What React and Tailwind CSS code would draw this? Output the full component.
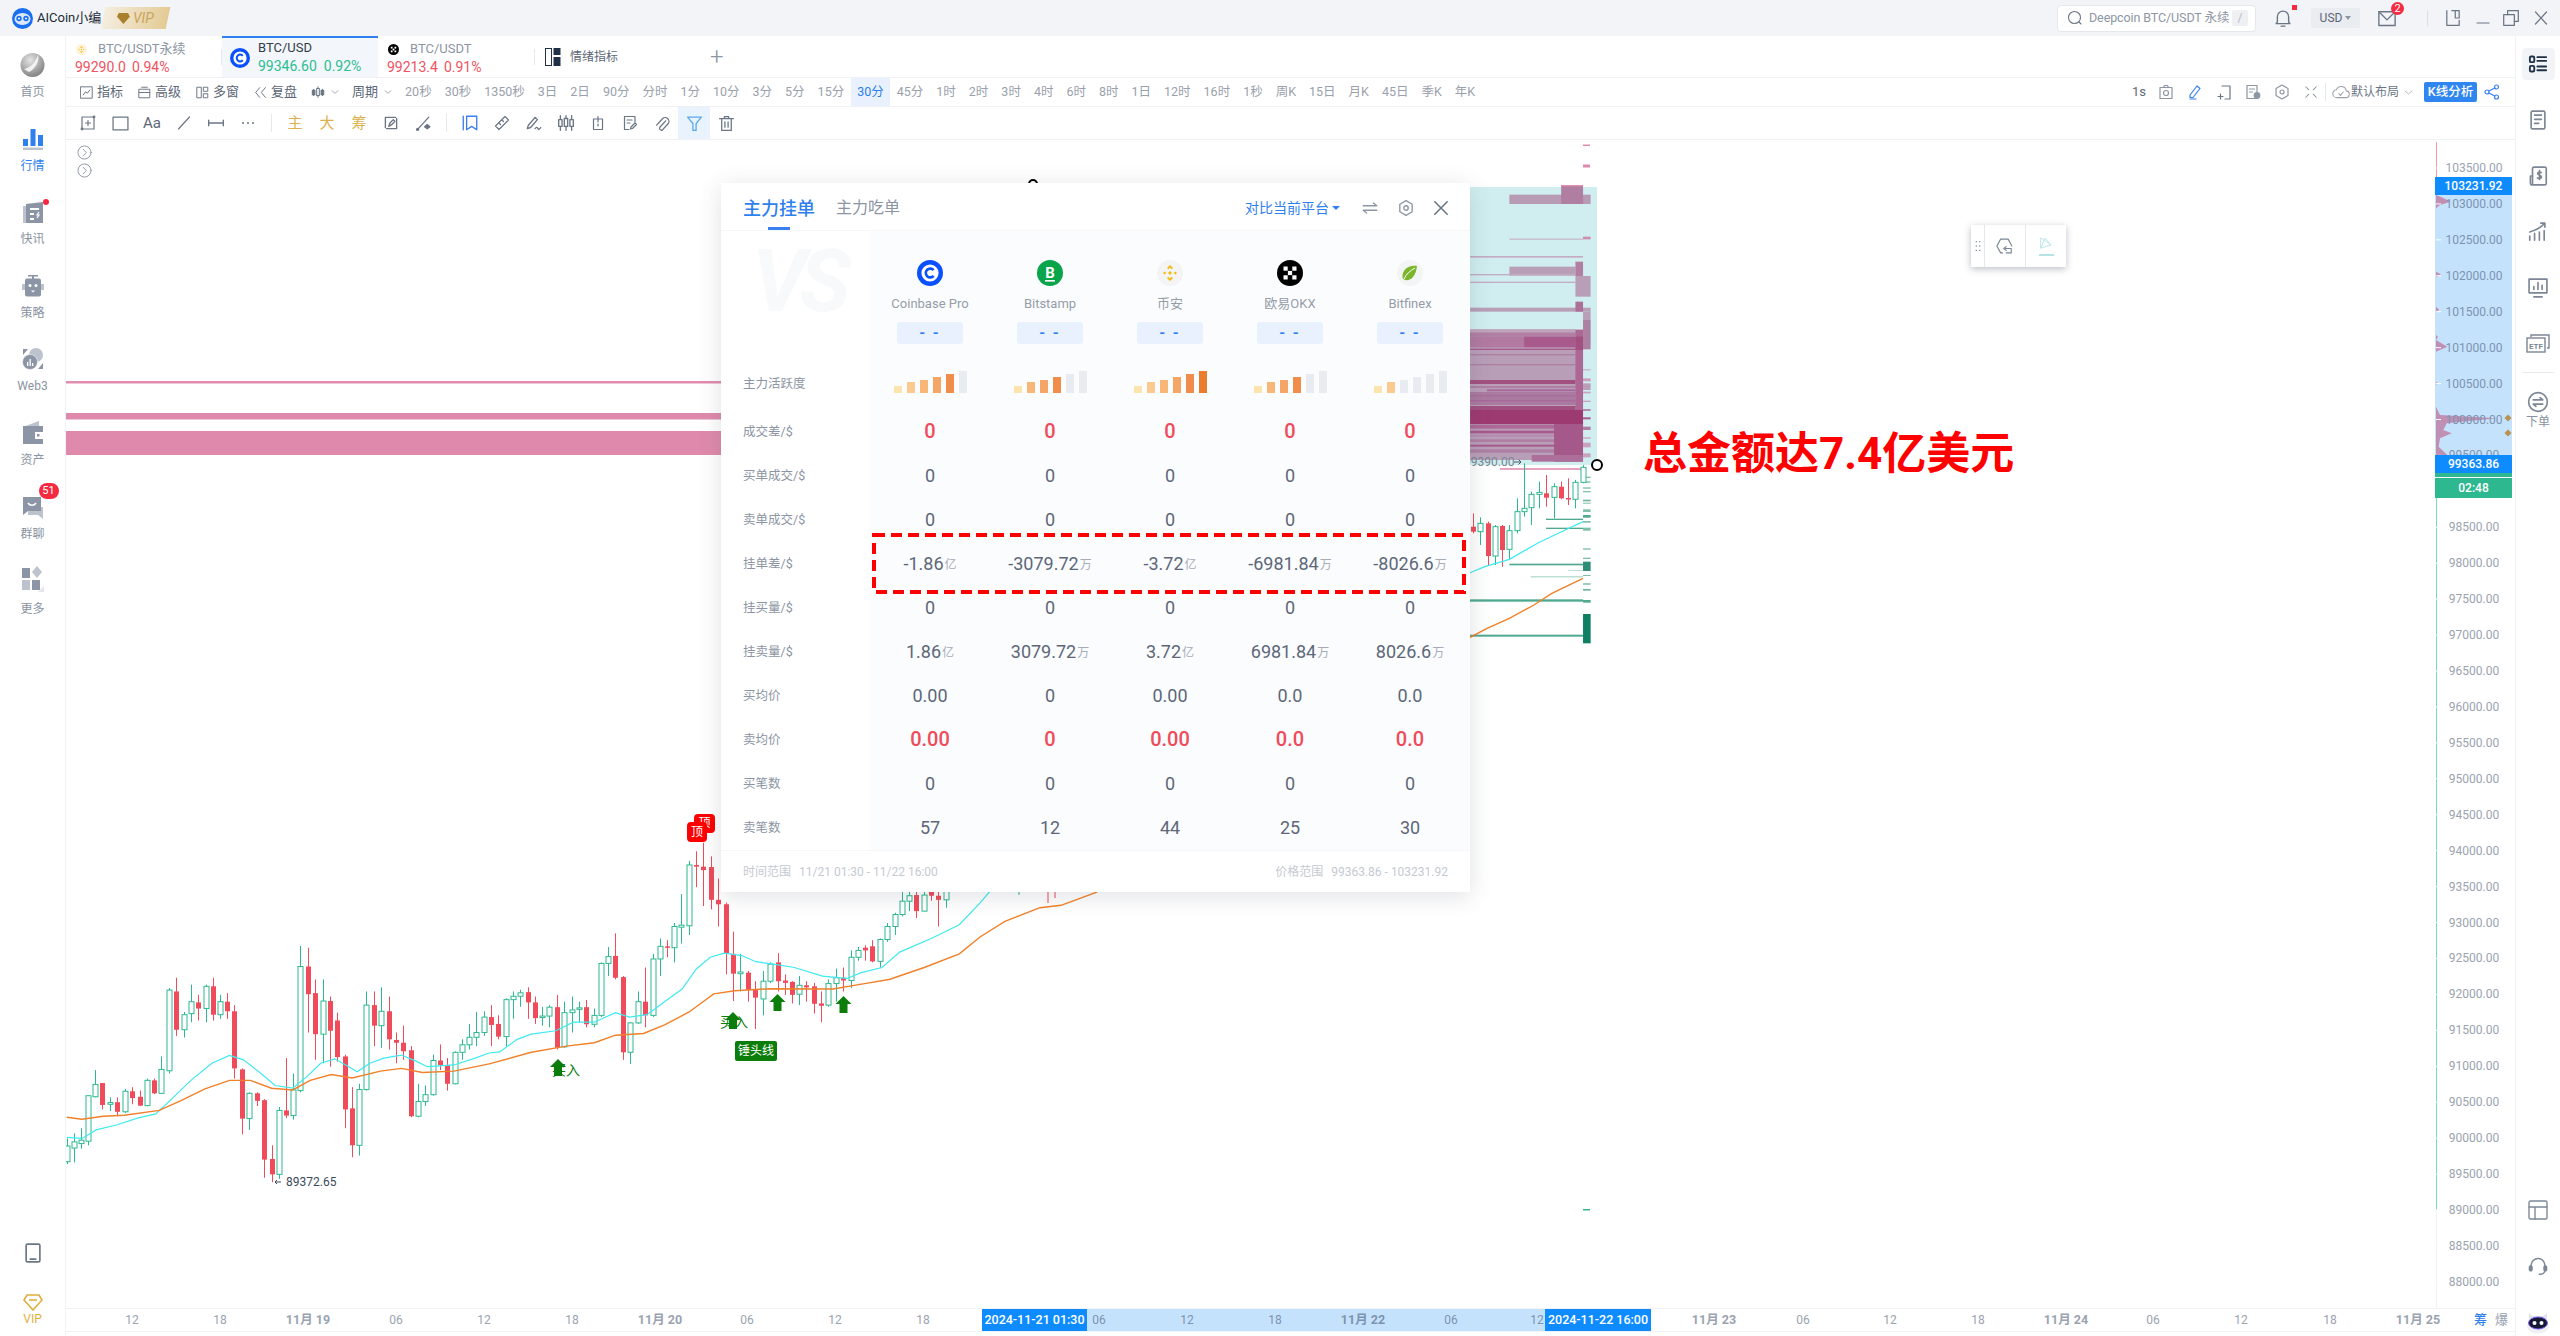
import React from "react";

const Ic = ({ s = 16, w, h, c = "#6b7685", sw = 1.2, children, className = "" }) => (
  <svg width={w || s} height={h || s} viewBox="0 0 16 16" fill="none" stroke={c} strokeWidth={sw} strokeLinecap="round" strokeLinejoin="round" className={`shrink-0 ${className}`}>
    {children}
  </svg>
);

// ---------- chart data, read off the reference ----------
const X7 = (x) => 40 + x / 1.425;
const Y7 = (y) => 800 + y / 2.925;
const X8 = (x) => 1400 + x / 2.24;
const Y8 = (y) => 160 + y / 3;

const Z7 = [
  [38,1012,1058,990,1065,0],[48,1000,1018,975,1060,0],[58,995,1005,960,1020,0],[69,865,998,865,1010,0],[79,832,868,790,870,0],[89,828,892,828,905,1],[100,885,890,870,910,0],[110,884,912,870,925,1],[121,852,912,845,915,0],[131,852,872,840,890,1],[142,868,894,850,895,1],[152,820,894,815,896,0],[163,820,858,815,860,1],[173,788,858,750,860,0],[184,556,792,550,800,0],[194,560,672,520,690,1],[205,628,672,620,695,0],[215,590,625,540,650,0],[225,592,610,570,645,1],[236,545,610,540,650,0],[246,545,628,520,645,1],[257,590,628,570,640,0],[267,590,618,565,640,1],[277,618,785,600,815,1],[288,788,932,785,978,1],[298,858,932,855,965,0],[309,858,880,855,895,1],[319,878,1052,875,1105,1],[330,1050,1095,1010,1118,1],[340,908,1095,898,1108,0],[351,908,923,755,930,1],[361,848,923,800,935,0],[371,487,850,427,855,0],[382,487,568,432,680,1],[392,565,685,525,760,1],[403,588,685,525,770,0],[413,588,675,575,780,1],[423,645,752,622,765,1],[434,750,905,745,960,1],[445,902,1010,840,1045,1],[455,847,1010,830,1040,0],[465,600,847,560,850,0],[476,600,660,560,720,1],[486,618,660,548,725,0],[497,618,700,575,730,1],[507,702,710,680,770,1],[517,710,735,660,760,1],[528,732,925,720,928,1],[539,882,925,830,928,0],[549,862,882,835,895,0],[560,762,862,745,865,0],[570,762,775,715,790,1],[580,775,830,755,850,1],[591,738,830,735,832,0],[601,716,738,700,760,0],[612,694,716,655,730,0],[622,680,694,620,720,0],[632,635,680,618,690,0],[643,635,658,600,720,1],[653,655,692,630,700,1],[664,584,692,580,720,0],[674,574,584,560,640,0],[684,564,574,555,605,0],[695,562,592,548,640,1],[705,592,638,575,655,1],[716,632,636,605,660,0],[726,606,632,600,665,0],[737,606,725,570,730,1],[747,622,722,590,725,0],[758,614,622,575,680,0],[768,608,612,590,650,0],[778,606,656,585,665,1],[789,630,656,610,665,0],[799,478,630,475,635,0],[810,458,478,430,515,0],[820,456,520,390,525,1],[831,518,738,515,760,1],[841,652,738,650,772,0],[852,590,652,560,655,0],[862,590,630,490,665,1],[873,465,630,450,635,0],[883,428,465,405,515,0],[893,428,432,410,460,1],[904,370,432,360,475,0],[914,366,372,275,420,0],[925,190,368,178,395,0],[935,190,195,150,255,1],[945,195,205,125,310,1],[956,196,292,165,320,1],[966,292,305,230,370,1],[977,305,448,300,510,1],[988,450,508,385,588,1],[998,503,508,450,560,0],[1009,505,555,500,590,1],[1019,555,578,530,670,1],[1030,530,582,500,630,0],[1040,480,530,475,535,0],[1051,475,530,448,560,1],[1061,528,535,510,570,1],[1071,532,570,530,595,1],[1082,542,568,515,600,0],[1092,542,548,530,590,1],[1103,545,596,535,625,1],[1113,595,602,560,650,1],[1123,537,600,525,605,0],[1134,520,537,493,590,0],[1144,520,528,490,560,1],[1155,460,528,440,550,0],[1165,440,460,430,470,0],[1176,432,440,425,470,1],[1186,428,472,410,475,1],[1197,408,472,405,490,0],[1207,370,408,360,415,0],[1218,335,370,330,395,0],[1228,296,335,268,340,0],[1239,280,296,265,325,0],[1249,278,325,265,345,1],[1259,278,325,260,325,0],[1270,268,280,250,295,1],[1280,280,292,265,370,1],[1291,262,292,250,315,0],
];
const Z8 = [
  [163,1100,1115,1060,1120,1],[180,1090,1115,1072,1155,0],[196,1090,1188,1085,1218,1],[213,1100,1188,1095,1215,0],[229,1098,1170,1095,1220,1],[245,1112,1168,1095,1200,0],[262,1055,1112,1015,1120,0],[278,1045,1055,910,1070,0],[294,1003,1043,995,1095,0],[311,997,1003,965,1045,0],[327,1000,1013,945,1040,1],[344,980,1012,970,1075,0],[360,980,1015,965,1018,1],[377,1014,1018,955,1035,1],[393,967,1018,960,1045,0],[410,922,967,915,970,0],
];
const candles = [
  ...Z7.map(([x, t, b, h, l, r]) => ({ x: X7(x), t: Y7(t), b: Y7(b), h: Y7(h), l: Y7(l), r })),
  ...Z8.map(([x, t, b, h, l, r]) => ({ x: X8(x), t: Y8(t), b: Y8(b), h: Y8(h), l: Y8(l), r })),
];

const cyan = [[38,987],[60,990],[80,965],[110,950],[140,930],[165,918],[190,870],[215,820],[245,770],[270,747],[290,760],[315,800],[335,835],[360,843],[380,810],[400,770],[420,757],[440,780],[452,795],[470,770],[490,755],[515,746],[535,763],[552,780],[590,775],[620,755],[640,740],[655,737],[680,700],[700,685],[735,675],[760,650],[790,650],[820,622],[840,635],[865,628],[890,590],[915,553],[935,495],[955,460],[975,448],[1000,455],[1020,473],[1045,480],[1075,490],[1115,515],[1150,522],[1170,505],[1200,490],[1225,445],[1270,405],[1310,365],[1340,300],[1365,240]].map(([x, y]) => `${X7(x)},${Y7(y)}`).concat([[157,1238],[190,1220],[245,1198],[310,1148],[370,1110],[410,1085]].map(([x, y]) => `${X8(x)},${Y8(y)}`)).join(" ");
const orange = [[38,928],[60,934],[90,925],[120,922],[170,908],[200,880],[235,845],[270,820],[300,820],[330,843],[360,848],[385,820],[415,803],[445,813],[485,793],[515,785],[545,797],[590,793],[640,772],[700,738],[750,720],[790,710],[820,688],[860,683],[890,658],[925,620],[960,567],[990,558],[1040,552],[1130,553],[1175,537],[1210,525],[1260,490],[1310,450],[1340,400],[1375,355],[1425,315],[1455,308],[1505,270]].map(([x, y]) => `${X7(x)},${Y7(y)}`).concat([[157,1432],[195,1405],[245,1375],[300,1335],[340,1300],[410,1255]].map(([x, y]) => `${X8(x)},${Y8(y)}`)).join(" ");

// x0, x1, y0, y1, colour : zoomed units of the heat map
const heat = [
  [157,410,508,900,"#b99eb8"],
  [245,427,104,132,"#b79ab4"],[361,410,75,132,"#b07ea0"],[361,410,75,79,"#e28caf"],
  [245,410,236,239,"#c3acc4"],[410,427,230,238,"#d08cb0"],[157,410,288,293,"#c3acc4"],
  [245,393,320,347,"#b99eb8"],[157,393,342,346,"#c3acc4"],[157,393,365,369,"#c3acc4"],
  [393,427,348,410,"#b99eb8"],[157,427,443,455,"#b99eb8"],[410,427,455,480,"#b99eb8"],
  [393,410,305,348,"#b27ea2"],[393,410,425,455,"#ac6f98"],[410,427,480,568,"#ad7fa3"],
  [157,393,508,516,"#c0a4bd"],[157,393,518,530,"#b07fa3"],[157,278,530,562,"#b27aa0"],[278,393,530,562,"#a85a8d"],
  [157,393,566,570,"#a85a8d"],[157,393,582,586,"#ad7fa3"],[157,393,612,616,"#ad7fa3"],
  [157,393,660,672,"#a2507f"],[157,393,678,684,"#b07fa3"],[195,393,688,694,"#a8689a"],[157,393,696,735,"#ab7aa0"],[157,393,706,709,"#a8689a"],[157,393,720,724,"#a8689a"],[157,393,738,750,"#a2507f"],
  [157,410,750,792,"#9e3a72"],[157,345,794,806,"#ad6a96"],[345,410,792,905,"#a5598a"],
  [157,345,812,820,"#a85a8d"],[157,345,824,830,"#b88ab0"],[157,345,838,846,"#b07fa3"],[157,345,854,860,"#a85a8d"],[157,345,868,878,"#ad7fa3"],[295,410,885,905,"#ab6f9a"],
  [393,410,510,750,"#ac6795"],[393,410,530,570,"#a2507f"],
  [410,427,628,631,"#c9a2bf"],[410,427,655,664,"#c9a2bf"],[410,427,670,690,"#b99eb8"],[410,427,695,700,"#c9a2bf"],[410,427,722,726,"#c9a2bf"],[410,427,748,752,"#a85a8d"],[410,427,772,778,"#a85a8d"],[410,427,800,810,"#ad7fa3"],[410,427,832,836,"#c9a2bf"],[410,427,848,862,"#c9a2bf"],[410,427,880,892,"#c9a2bf"],
];
const greens = [
  [327,410,1076,1080,"#4ea98f"],[327,410,1103,1107,"#4ea98f"],[245,410,1211,1216,"#4ea98f"],[293,410,1249,1252,"#9dcfbf"],[377,410,1230,1232,"#9dcfbf"],[100,410,1318,1325,"#4ea98f"],[100,410,1424,1430,"#4ea98f"],
  [410,427,950,954,"#7dbfa9"],[410,427,964,968,"#7dbfa9"],[410,427,982,986,"#7dbfa9"],[410,427,993,997,"#7dbfa9"],[410,427,1019,1024,"#6db5a0"],[410,427,1028,1031,"#7dbfa9"],[410,427,1048,1056,"#7dbfa9"],[410,427,1065,1073,"#4ea98f"],[410,427,1083,1088,"#7dbfa9"],[410,427,1103,1112,"#7dbfa9"],[410,427,1165,1169,"#7dbfa9"],[410,427,1193,1197,"#7dbfa9"],[410,427,1205,1233,"#2f8f76"],[410,427,1245,1248,"#7dbfa9"],[410,427,1270,1274,"#6db5a0"],[410,427,1287,1292,"#6db5a0"],[410,427,1320,1328,"#4ea98f"],[410,427,1362,1450,"#0f7f64"],
];
const profile = [[228,165],[245,172],[272,185],[240,195],[228,205],[228,395],[243,403],[228,412],[228,500],[238,510],[228,515],[228,585],[234,590],[228,600],[262,620],[228,635],[228,725],[234,730],[228,735],[228,800],[240,825],[410,835],[260,850],[250,870],[275,880],[240,895],[236,920],[262,945],[228,945]].map(([x, y]) => `${2360 + x / 3},${140 + y / 3}`).join(" ");

const prices = Array.from({ length: 32 }, (_, i) => ({ v: (103500 - i * 500).toFixed(2), y: 168 + i * 35.93 }));
const times = [[132,"12"],[220,"18"],[308,"11月 19",1],[396,"06"],[484,"12"],[572,"18"],[660,"11月 20",1],[747,"06"],[835,"12"],[923,"18"],[1099,"06",0,1],[1187,"12",0,1],[1275,"18",0,1],[1363,"11月 22",1,1],[1451,"06",0,1],[1537,"12",0,1],[1714,"11月 23",1],[1803,"06"],[1890,"12"],[1978,"18"],[2066,"11月 24",1],[2153,"06"],[2241,"12"],[2330,"18"],[2418,"11月 25",1]];

const periods = ["20秒","30秒","1350秒","3日","2日","90分","分时","1分","10分","3分","5分","15分","30分","45分","1时","2时","3时","4时","6时","8时","1日","12时","16时","1秒","周K","15日","月K","45日","季K","年K"];

// ---------- logos ----------
const Coinbase = ({ s = 26 }) => (
  <svg width={s} height={s} viewBox="0 0 26 26" className="shrink-0">
    <circle cx="13" cy="13" r="13" fill="#0a50ff" />
    <circle cx="13" cy="13" r="8.600" fill="#fff" />
    <path d="M16.600 10.200a4.400 4.400 0 1 0 0 5.600" fill="none" stroke="#0a50ff" strokeWidth="2.600" />
  </svg>
);
const Bitstamp = () => (
  <svg width="26" height="26" viewBox="0 0 26 26" className="shrink-0">
    <circle cx="13" cy="13" r="13" fill="#0aa44a" />
    <text x="13" y="18" textAnchor="middle" fontSize="15" fontWeight="700" fill="#fff" fontFamily="Roboto">B</text>
    <rect x="8" y="20" width="10" height="1.600" fill="#fff" />
  </svg>
);
const Binance = ({ s = 26, bg = "#f4f4f5" }) => (
  <svg width={s} height={s} viewBox="0 0 26 26" className="shrink-0">
    <circle cx="13" cy="13" r="13" fill={bg} />
    <g fill="#f5b90b">
      <path d="M13 5l3 3-1.300 1.300L13 7.600l-1.700 1.700L10 8zM13 21l3-3-1.300-1.300-1.700 1.700-1.700-1.700L10 18zM6 13l1.600-1.600L9.200 13l-1.600 1.600zM20 13l-1.600-1.600-1.600 1.600 1.600 1.600zM13 11l2 2-2 2-2-2z" />
    </g>
  </svg>
);
const Okx = ({ s = 26 }) => (
  <svg width={s} height={s} viewBox="0 0 26 26" className="shrink-0">
    <circle cx="13" cy="13" r="13" fill="#000" />
    <g fill="#fff">
      <rect x="6.500" y="6.500" width="4.200" height="4.200" /><rect x="15.300" y="6.500" width="4.200" height="4.200" /><rect x="10.900" y="10.900" width="4.200" height="4.200" /><rect x="6.500" y="15.300" width="4.200" height="4.200" /><rect x="15.300" y="15.300" width="4.200" height="4.200" />
    </g>
  </svg>
);
const Bitfinex = () => (
  <svg width="26" height="26" viewBox="0 0 26 26" className="shrink-0">
    <circle cx="13" cy="13" r="13" fill="#f3f4f4" />
    <path d="M20 6C12 5 5 9 5.500 18 7 21 13 21 16 17 18.500 14 19.500 10 20 6z" fill="#7ab52c" />
    <path d="M18 8C13 11 9 14 7 19" fill="none" stroke="#fff" strokeWidth="1" />
  </svg>
);

// ---------- panel ----------
const cols = [
  { n: "Coinbase Pro", L: Coinbase, a: 5 },
  { n: "Bitstamp", L: Bitstamp, a: 4 },
  { n: "币安", L: Binance, a: 6 },
  { n: "欧易OKX", L: Okx, a: 4 },
  { n: "Bitfinex", L: Bitfinex, a: 2 },
];
const barColors = ["#fde3ae", "#fcca8f", "#f8b777", "#f5a666", "#f08d4c", "#ea7c2f"];
const barH = [7, 11, 13, 16, 19, 22];
const rows = [
  ["成交差/$", ["0","0","0","0","0"], 1],
  ["买单成交/$", ["0","0","0","0","0"]],
  ["卖单成交/$", ["0","0","0","0","0"]],
  ["挂单差/$", [["-1.86","亿"],["-3079.72","万"],["-3.72","亿"],["-6981.84","万"],["-8026.6","万"]]],
  ["挂买量/$", ["0","0","0","0","0"]],
  ["挂卖量/$", [["1.86","亿"],["3079.72","万"],["3.72","亿"],["6981.84","万"],["8026.6","万"]]],
  ["买均价", ["0.00","0","0.00","0.0","0.0"]],
  ["卖均价", ["0.00","0","0.00","0.0","0.0"], 1],
  ["买笔数", ["0","0","0","0","0"]],
  ["卖笔数", ["57","12","44","25","30"]],
];

const Panel = () => (
  <div className="absolute left-[655px] top-[43px] w-[749px] h-[709px] flex flex-col bg-white shadow-[0_4px_22px_rgba(60,70,90,0.16)]">
    <div className="relative h-[48px] flex items-center pl-[22px] pr-[20px] pt-[3px] border-b border-[#f6f7f9]">
      <span className="text-[18px] font-medium text-[#2f7fee]">主力挂单</span>
      <span className="ml-[21px] text-[16px] text-[#8c95a3]">主力吃单</span>
      <span className="absolute left-[47px] bottom-0 w-[22px] h-[3px] bg-[#3b7ff0]" />
      <div className="ml-auto flex items-center">
        <span className="text-[14px] text-[#2f7fee]">对比当前平台</span>
        <span className="ml-[3px] w-0 h-0 border-x-[4px] border-x-transparent border-t-[4px] border-t-[#2f7fee]" />
        <Ic s={18} c="#8d96a3" className="ml-[21px]"><path d="M2 6h12l-3-2.500M14 10H2l3 2.500" /></Ic>
        <Ic s={18} c="#8d96a3" className="ml-[18px]"><path d="M8 1.500l5.500 3.200v6.600L8 14.500l-5.500-3.200V4.700z" /><circle cx="8" cy="8" r="2" /></Ic>
        <Ic s={18} c="#6b7685" sw={1.400} className="ml-[17px]"><path d="M2.500 2.500l11 11M13.500 2.500l-11 11" /></Ic>
      </div>
    </div>
    <div className="flex h-[619px]">
      <div className="w-[149px] flex flex-col shrink-0 pl-[22px]">
        <div className="h-[129px] flex items-center overflow-hidden">
          <span className="text-[86px] leading-none font-bold italic tracking-[-7px] text-[#f8f9fb] mt-[-28px] ml-[9px]">VS</span>
        </div>
        <div className="h-[50px] pb-[2px] flex items-center text-[12.500px] text-[#8c95a3]">主力活跃度</div>
        {rows.map((r) => (
          <div key={r[0]} className="h-[44px] flex items-center text-[12.500px] text-[#8c95a3]">{r[0]}</div>
        ))}
      </div>
      {cols.map((c, ci) => (
        <div key={c.n} className="w-[120px] flex flex-col items-center bg-[#fbfcfe]">
          <div className="h-[129px] w-full flex flex-col items-center pt-[29px]">
            <c.L />
            <div className="mt-[8px] h-[20px] leading-[20px] text-[13px] text-[#949ca8]">{c.n}</div>
            <div className="mt-[8px] w-[66px] h-[22px] rounded-[3px] bg-[#e8f1fd] flex items-center justify-center text-[15px] font-bold tracking-[2px] text-[#2f7fee]">- -</div>
          </div>
          <div className="h-[50px] w-full flex items-end justify-center gap-[5px] pb-[17px]">
            {barH.map((h, i) => (
              <span key={i} className="w-[8px]" style={{ height: h, background: i < c.a ? barColors[c.a === 2 ? i : c.a === 4 ? i + 1 - (i === 0 ? 1 : 0) : i] : "#e8ebef" }} />
            ))}
          </div>
          {rows.map((r) => {
            const v = r[1][ci];
            return (
              <div key={r[0]} className={`h-[44px] pb-[2px] flex items-center justify-center ${r[2] ? "text-[20px] font-medium text-[#ef4b5b]" : "text-[18px] text-[#5d6778]"}`}>
                {Array.isArray(v) ? (
                  <>
                    <span>{v[0]}</span>
                    <span className="ml-[1px] mt-[4px] text-[12px] text-[#a5acb7]">{v[1]}</span>
                  </>
                ) : v}
              </div>
            );
          })}
        </div>
      ))}
    </div>
    <div className="flex-1 flex items-center justify-between pl-[22px] pr-[22px] border-t border-[#f6f7f9] text-[12px] text-[#c5cad2]">
      <span><span>时间范围</span><span className="ml-[8px]">11/21 01:30 - 11/22 16:00</span></span>
      <span><span>价格范围</span><span className="ml-[8px]">99363.86 - 103231.92</span></span>
    </div>
  </div>
);

// ---------- chart drawing ----------
const Rects = ({ list, X = X8, Y = Y8 }) =>
  list.map(([a, b, c, d, col], i) => <rect key={i} x={X(a)} y={Y(c)} width={X(b) - X(a)} height={Y(d) - Y(c)} fill={col} />);

const Arrow = ({ x, y }) => (
  <path d={`M${x} ${y - 9}l8 8h-4v9h-8v-9h-4z`} fill="#0a7d0a" />
);

const ChartSvg = () => (
  <svg width="2449" height="1168" viewBox="66 140 2449 1168" className="absolute inset-0" fontFamily="Roboto, 'Noto Sans CJK SC', sans-serif">
    <rect x="66" y="381" width="1000" height="2.500" fill="#e28caf" />
    <rect x="66" y="413" width="1000" height="6.500" fill="#df8aac" />
    <rect x="66" y="431" width="1000" height="24" fill="#df8aac" />
    <rect x="1583" y="144.500" width="7" height="1.500" fill="#e28caf" />
    <rect x="1583" y="164.500" width="7" height="3" fill="#df8aac" />
    <rect x="1400" y="187" width="197" height="278" fill="#d0eeef" />
    <Rects list={heat} />
    <rect x="1500" y="468" width="84" height="2" fill="#e6a2bf" />
    <Rects list={greens} />
    <rect x="1583" y="1209" width="7" height="1.500" fill="#2db890" />
    {candles.map((c, i) => {
      const x = Math.round(c.x) + 0.5;
      const col = c.r ? "#ef4b5b" : "#2db890";
      return (
        <g key={i}>
          <line x1={x} x2={x} y1={c.h} y2={c.l} stroke={col} strokeWidth="1" />
          {c.r ? (
            <rect x={x - 2.5} y={c.t} width="5" height={Math.max(c.b - c.t, 1.5)} fill={col} />
          ) : (
            <rect x={x - 2.5} y={c.t} width="5" height={Math.max(c.b - c.t, 1.5)} fill="#fff" stroke={col} strokeWidth="1" />
          )}
        </g>
      );
    })}
    <polyline points={cyan} fill="none" stroke="#3fe9f0" strokeWidth="1.200" />
    <polyline points={orange} fill="none" stroke="#f0802a" strokeWidth="1.400" />
    <line x1="1019" x2="1019" y1="888" y2="895" stroke="#2db890" />
    <line x1="1048" x2="1048" y1="888" y2="903" stroke="#ef4b5b" />
    <line x1="1055" x2="1055" y1="888" y2="898" stroke="#ef4b5b" />
    <text x="1464" y="466" fontSize="12" fill="#7a8494">99390.00</text>
    <path d="M1514 462h7m-2.500-2.500l2.500 2.500-2.500 2.500" fill="none" stroke="#4a5666" strokeWidth="1" />
    <circle cx="1597" cy="465" r="5" fill="#fff" stroke="#000" strokeWidth="2" />
    <circle cx="1033" cy="184" r="4" fill="#fff" stroke="#000" strokeWidth="2" />

    {/* right axis */}
    <line x1="2436.500" x2="2436.500" y1="142" y2="1308" stroke="#f0f2f5" />
    <rect x="2435" y="195" width="77" height="260" fill="#c5e2fd" />
    <polygon points={profile} fill="#c08fb4" />
    <line x1="2436.500" x2="2436.500" y1="142" y2="177" stroke="#f59aa5" />
    <line x1="2436.500" x2="2436.500" y1="498" y2="1210" stroke="#7fd9bd" />
    {prices.map((p) => <line key={p.v} x1="2436" x2="2441" y1={p.y} y2={p.y} stroke="#fff" />)}
    <path d="M2508 414.500l3.500 3.500-3.500 3.500-3.500-3.500zM2508 429.500l3.500 3.500-3.500 3.500-3.500-3.500z" fill="#b8924e" />

    {/* signals */}
    <text x="720" y="1027" fontSize="14" fill="#0a7d0a">买入</text>
    <text x="552" y="1075" fontSize="14" fill="#0a7d0a">买入</text>
    <Arrow x={558} y={1068} />
    <Arrow x={733} y={1021} />
    <Arrow x={777.500} y={1003} />
    <Arrow x={843.500} y={1005} />
    <path d="M281 1182h-6m2-2l-2 2 2 2" fill="none" stroke="#3a4a5c" strokeWidth="1" />
  </svg>
);

// ---------- sidebars ----------
const G = "#8b95a5", L = "#bcc3cd";
const NavIcons = {
  home: (
    <svg width="25" height="26" viewBox="0 0 25 26">
      <defs><radialGradient id="hg" cx="0.4" cy="0.3" r="0.8"><stop offset="0" stopColor="#e5e5e5" /><stop offset="1" stopColor="#757575" /></radialGradient></defs>
      <circle cx="12.500" cy="13" r="12" fill="url(#hg)" />
      <path d="M4 17c6-1 11-6 14-14 2 6-3 14-9 17z" fill="#f1f1f1" />
    </svg>
  ),
  market: (
    <svg width="22" height="22" viewBox="0 0 22 22">
      <rect x="1" y="11" width="5" height="7" fill="#2f7fee" /><rect x="8.500" y="1" width="5" height="17" fill="#2f7fee" /><rect x="16" y="7" width="5" height="11" fill="#2f7fee" />
      <rect x="1" y="19.500" width="20" height="2.500" fill="#bcc3cd" />
    </svg>
  ),
  news: (
    <svg width="24" height="24" viewBox="0 0 24 24">
      <rect x="2" y="6" width="4" height="17" fill={L} /><path d="M5 4l17-2v21H5z" fill={G} />
      <path d="M9 8h9v2H9zM9 18h4v2H9zM9 13h4v2H9z" fill="#fff" /><path d="M18 12l-2 3h2l-2 3" stroke="#fff" strokeWidth="1.200" fill="none" />
    </svg>
  ),
  bot: (
    <svg width="24" height="22" viewBox="0 0 24 22">
      <rect x="7" y="0" width="10" height="1.500" fill={G} /><rect x="11" y="1" width="2" height="3" fill={G} />
      <rect x="4" y="3.500" width="16" height="18" rx="2" fill={G} /><rect x="1" y="9" width="3" height="6" fill={L} /><rect x="20" y="9" width="3" height="6" fill={L} />
      <circle cx="9" cy="10.500" r="1.500" fill="#fff" /><circle cx="15" cy="10.500" r="1.500" fill="#fff" /><path d="M10 15.500h4l-2 2z" fill="#fff" />
    </svg>
  ),
  web3: (
    <svg width="24" height="24" viewBox="0 0 24 24">
      <path d="M2 2h5L2 8zM22 22h-5l5-6z" fill={G} /><circle cx="15" cy="8" r="7" fill={L} /><circle cx="9" cy="15" r="7.500" fill={G} stroke="#fff" strokeWidth=".5" />
      <path d="M6 15h1.300v4H6zM8.500 12h1.300v7H8.500zM11 16h1.300v3H11z" fill="#fff" />
    </svg>
  ),
  wallet: (
    <svg width="24" height="24" viewBox="0 0 24 24">
      <path d="M2 6L18 0v5z" fill={L} /><rect x="2" y="5" width="20" height="18" fill={G} /><rect x="14" y="11" width="8" height="7" fill="#fff" /><rect x="16" y="13" width="2.500" height="2.500" fill={G} />
    </svg>
  ),
  chat: (
    <svg width="24" height="24" viewBox="0 0 24 24">
      <path d="M7 12h15v12l-5-4H7z" fill={L} /><path d="M2 2h18v14H7l-5 4z" fill={G} /><path d="M7 8c2 3 6 3 8 0" stroke="#fff" strokeWidth="1.600" fill="none" />
    </svg>
  ),
  more: (
    <svg width="26" height="26" viewBox="0 0 26 26">
      <rect x="2" y="2" width="8" height="10" fill={G} /><path d="M17 0l5 6-5 6-5-6z" fill={L} /><rect x="2" y="14" width="8" height="10" fill={L} /><rect x="12" y="14" width="8" height="10" fill={G} /><path d="M24 20v6h-6z" fill="#e3e6ea" />
    </svg>
  ),
};
const nav = [
  ["home", "首页"], ["market", "行情", 1], ["news", "快讯", 0, "dot"], ["bot", "策略"], ["web3", "Web3"], ["wallet", "资产"], ["chat", "群聊", 0, "51"], ["more", "更多"],
];

const Sidebar = () => (
  <aside className="w-[66px] shrink-0 border-r border-[#f0f2f5] flex flex-col items-center pt-[15px] pb-[9px]">
    <div className="flex flex-col items-center gap-[23.600px]">
      {nav.map(([k, t, act, b]) => (
        <div key={k} className="relative h-[50px] w-[50px] flex flex-col items-center">
          <div className="h-[28px] flex items-center justify-center">{NavIcons[k]}</div>
          <div className={`${k === "more" ? "mt-[8px]" : "mt-[4px]"} h-[18px] leading-[18px] text-[12px] ${act ? "text-[#2f7fee]" : "text-[#8a93a0]"}`}>{t}</div>
          {b === "dot" && <span className="absolute right-[9px] top-[1px] w-[6px] h-[6px] rounded-full bg-[#f5293f]" />}
          {b === "51" && <span className="absolute left-[31px] top-[-10px] w-[20px] h-[16px] rounded-full bg-[#f5293f] text-white text-[11px] leading-[16px] text-center">51</span>}
        </div>
      ))}
    </div>
    <div className="mt-auto flex flex-col items-center">
      <Ic s={24} w={22} c="#6b7685"><rect x="3" y="1.500" width="10" height="13" rx="1" /><path d="M6 12.500h4" /></Ic>
      <svg width="20" height="18" viewBox="0 0 20 18" className="mt-[28px]">
        <path d="M4 2h12l3 5-9 10L1 7z" fill="none" stroke="#e0ae3d" strokeWidth="1.600" /><path d="M6 7h8" stroke="#e0ae3d" strokeWidth="1.600" />
      </svg>
      <div className="text-[12px] leading-[16px] text-[#e0ae3d]">VIP</div>
    </div>
  </aside>
);

const RailBtn = ({ children, active }) => (
  <div className={`w-[33px] h-[32px] rounded-[4px] flex items-center justify-center ${active ? "bg-[#f2f4f7]" : ""}`}>{children}</div>
);
const RC = "#7c8695";
const RightRail = () => (
  <aside className="w-[45px] shrink-0 border-l border-[#f0f2f5] flex flex-col items-center pt-[12px] pb-[2px]">
    <div className="flex flex-col items-center gap-[24px]">
      <RailBtn active><Ic s={20} c="#1f3047" sw={1.500}><rect x="1.500" y="2" width="3.500" height="4.500" rx="1" /><rect x="1.500" y="9.500" width="3.500" height="4.500" rx="1" /><path d="M7.500 2.500h7M7.500 5.500h7M7.500 10h7M7.500 13h7" /></Ic></RailBtn>
      <RailBtn><Ic s={22} c={RC}><rect x="3" y="1.500" width="10" height="13" rx="1" /><path d="M5.500 4.500h5M5.500 7.500h5M5.500 10.500h3" /></Ic></RailBtn>
      <RailBtn><Ic s={22} c={RC}><rect x="4" y="1.500" width="10" height="13" rx="1" /><path d="M4 8H2.500v5c0 1 .6 1.500 1.500 1.500" /><path d="M10.300 5.500C9.500 4.800 7.800 5 7.800 6.200 7.800 7.800 10.500 7 10.500 8.800c0 1.200-1.900 1.400-2.900.6M9.100 4v6.500" /></Ic></RailBtn>
      <RailBtn><Ic s={22} c={RC}><path d="M2 14v-3M5.500 14V9M9 14V8M12.500 14V7M2 8c4-1 8-3 11-6.500M10 1.500h3v3" /></Ic></RailBtn>
      <RailBtn><Ic s={22} c={RC}><rect x="1.500" y="1.500" width="13" height="10" /><path d="M5 14.500h6M5 9V7M8 9V4M11 9V6" /></Ic></RailBtn>
      <RailBtn>
        <svg width="24" height="20" viewBox="0 0 24 20" fill="none" stroke={RC} strokeWidth="1.400">
          <path d="M5 3V1h18v13h-2" /><rect x="1" y="4" width="18" height="14" />
          <text x="10" y="14.500" textAnchor="middle" fontSize="8" fontWeight="700" fill={RC} stroke="none" fontFamily="Roboto">ETF</text>
        </svg>
      </RailBtn>
    </div>
    <div className="mt-[12px] w-[32px] h-px bg-[#e8eaee]" />
    <div className="mt-[18px]">
      <Ic s={22} c={RC}><circle cx="8" cy="8" r="6.800" /><path d="M4.500 6.500h7L9.500 4.800M11.500 9.500h-7l2 1.700" /></Ic>
    </div>
    <div className="text-[12px] leading-[16px] mt-[1px] text-[#8a93a0]">下单</div>
    <div className="mt-auto flex flex-col items-center gap-[33px]">
      <Ic s={24} w={24} c={RC} sw={0.9}><rect x="2" y="2" width="12" height="12" rx="1" /><path d="M2 6h12M6 6v8" /></Ic>
      <Ic s={22} c={RC} sw={1.100}><path d="M3 11V7.500a5 5 0 0 1 10 0V11" /><rect x="1.800" y="8" width="1.800" height="3.500" rx=".8" fill={RC} /><rect x="12.400" y="8" width="1.800" height="3.500" rx=".8" fill={RC} /><path d="M13 11.500c0 1.500-2 2.500-4 2.500" /></Ic>
      <svg width="24" height="24" viewBox="0 0 24 24">
        <path d="M3 3l3.500 3h11L21 3v10H3z" fill="#dfe3ea" /><ellipse cx="12" cy="16" rx="11" ry="7.500" fill="#eef0f5" />
        <ellipse cx="12" cy="13" rx="9.500" ry="6" fill="#141a33" stroke="#7d5cf0" strokeWidth="1" /><circle cx="8.500" cy="13" r="2" fill="#fff" /><circle cx="15.500" cy="13" r="2" fill="#fff" />
      </svg>
    </div>
  </aside>
);

// ---------- top ----------
const TopBar = () => (
  <header className="h-[36px] shrink-0 bg-[#f2f4f7] flex items-center pl-[12px] pr-[11px]">
    <svg width="21" height="21" viewBox="0 0 21 21" className="shrink-0">
      <circle cx="10.500" cy="10.500" r="10.500" fill="#1a6ff0" />
      <ellipse cx="10.500" cy="11" rx="8" ry="6" fill="#dbe9fb" />
      <circle cx="7" cy="10.500" r="2.700" fill="#1a6ff0" /><circle cx="14" cy="10.500" r="2.700" fill="#1a6ff0" />
      <circle cx="7" cy="10.500" r="1" fill="#fff" /><circle cx="14" cy="10.500" r="1" fill="#fff" />
    </svg>
    <span className="ml-[4px] text-[13px] text-[#222b38]">AICoin小编</span>
    <div className="ml-[2px] w-[65px] h-[22px] -skew-x-12 bg-gradient-to-r from-[#f4eee0] to-[#e4cb94] flex items-center justify-center gap-[3px]">
      <svg width="13" height="13" viewBox="0 0 14 14" className="skew-x-12"><path d="M2 1h10l2 4-7 8-7-8z" fill="#a9802d" /></svg>
      <span className="text-[14px] italic skew-x-12 text-[#c9a45c]">VIP</span>
    </div>
    <div className="ml-auto w-[199px] h-[27px] rounded-[4px] bg-white border border-[#e4e7ec] flex items-center pl-[9px] pr-[7px]">
      <Ic s={16} c="#6b7685" sw={1.100}><circle cx="7.500" cy="7.500" r="6" /><path d="M12 12l2 2" /></Ic>
      <span className="ml-[6px] text-[12.500px] tracking-[-0.1px] whitespace-nowrap text-[#8d96a3]">Deepcoin BTC/USDT 永续</span>
      <span className="ml-auto w-[16px] h-[16px] rounded-[2px] bg-[#eef0f3] text-[12px] leading-[16px] text-center text-[#b5bbc5]">/</span>
    </div>
    <div className="relative ml-[17px]">
      <Ic s={20} c="#6b7685" sw={1.100}><path d="M3.500 11V7a4.500 4.500 0 0 1 9 0v4l1 1.500h-11zM6.500 14.500h3" /></Ic>
      <span className="absolute right-[-4px] top-[-3px] w-[5px] h-[5px] bg-[#f5293f]" />
    </div>
    <div className="ml-[18px] w-[49px] h-[20px] bg-[#e9ecf0] rounded-[2px] flex items-center justify-center gap-[3px] text-[12px] text-[#5d6778]">
      USD<span className="w-0 h-0 border-x-[3.500px] border-x-transparent border-t-[4px] border-t-[#8d96a3]" />
    </div>
    <div className="relative ml-[17px]">
      <Ic s={20} c="#6b7685" sw={1.100}><rect x="1.500" y="3" width="13" height="11" /><path d="M1.500 3L8 9.500 14.500 3" /></Ic>
      <span className="absolute right-[-7px] top-[-6px] w-[13px] h-[13px] rounded-full bg-[#f5293f] text-white text-[11px] leading-[13px] text-center">2</span>
    </div>
    <div className="ml-[30px] w-px h-[16px] bg-[#dcdfe4]" />
    <Ic s={18} c="#6b7685" sw={1.100} className="ml-[16px]"><path d="M2.500 1.500v13h11M7 1.500h6.500v6.500H10V1.500M13.500 10v4.500" /></Ic>
    <Ic s={16} c="#6b7685" className="ml-[13px]"><path d="M2 13h12" /></Ic>
    <Ic s={18} c="#6b7685" sw={1.100} className="ml-[11px]"><rect x="1.500" y="5" width="9.500" height="9.500" /><path d="M5 5V1.500h9.500V11H11" /></Ic>
    <Ic s={16} c="#6b7685" className="ml-[13px]"><path d="M2.500 2l11 12M13.500 2l-11 12" /></Ic>
  </header>
);

const Tabs = () => (
  <div className="h-[41px] shrink-0 flex items-center">
    <div className="w-[155px] h-full flex flex-col pl-[9px] pt-[4px]">
      <div className="h-[18px] flex items-center text-[13px] text-[#8c95a3]"><span className="ml-[1px]"><Binance s={11} bg="#fdf3d8" /></span><span className="ml-[11px]">BTC/USDT永续</span></div>
      <div className="h-[18px] flex items-center gap-[6px] text-[14px] text-[#f0525f]"><span>99290.0</span><span>0.94%</span></div>
    </div>
    <div className="w-px h-[16px] bg-[#e6e8ec]" />
    <div className="w-[156px] h-full bg-[#f3f6fa] border-t-2 border-[#2f7fee] flex items-center pl-[8px]">
      <Coinbase s={20} />
      <div className="ml-[8px]">
        <div className="h-[18px] leading-[18px] text-[13px] text-[#333c4a] mt-[-1px]">BTC/USD</div>
        <div className="h-[18px] flex items-center gap-[7px] text-[14px] text-[#2dbd92]"><span>99346.60</span><span>0.92%</span></div>
      </div>
    </div>
    <div className="w-[156px] h-full flex flex-col pl-[9px] pt-[4px]">
      <div className="h-[18px] flex items-center text-[13px] text-[#8c95a3]"><span className="ml-[1px]"><Okx s={11} /></span><span className="ml-[11px]">BTC/USDT</span></div>
      <div className="h-[18px] flex items-center gap-[6px] text-[14px] text-[#f0525f]"><span>99213.4</span><span>0.91%</span></div>
    </div>
    <div className="w-px h-[16px] bg-[#e6e8ec]" />
    <div className="ml-[10px] flex items-center">
      <svg width="16" height="18" viewBox="0 0 16 18" className="shrink-0"><rect x=".5" y=".5" width="6" height="17" fill="#fff" stroke="#1f3047" /><rect x="8.500" y="0" width="7" height="7" fill="#1f3047" /><rect x="8.500" y="9" width="7" height="9" fill="#1f3047" /></svg>
      <span className="ml-[9px] text-[12px] text-[#5d6778]">情绪指标</span>
    </div>
    <span className="ml-[92px] text-[24px] font-light leading-none text-[#8d96a3]">+</span>
  </div>
);

const TI = ({ ic, t, chev, mr = "mr-[16px]" }) => (
  <div className={`flex items-center gap-[4px] ${mr} text-[13px] text-[#5d6778] whitespace-nowrap`}>
    {ic}
    {t && <span>{t}</span>}
    {chev && <Ic s={8} c="#6b7685" className="ml-[2px]"><path d="M2 5.500l6 5 6-5" /></Ic>}
  </div>
);

const Toolbar1 = () => (
  <div className="h-[30px] shrink-0 flex items-center border-y border-[#eff1f4] pl-[14px] pr-[15px]">
    <TI t="指标" mr="mr-[15px]" ic={<Ic s={13}><rect x="1" y="1" width="14" height="14" /><path d="M4 11l3-4 2 2 3-4" /></Ic>} />
    <TI t="高级" mr="mr-[15px]" ic={<Ic s={13}><rect x="1.500" y="4" width="13" height="10.500" /><path d="M1.500 8h13M4.500 1.500h7" /></Ic>} />
    <TI t="多窗" mr="mr-[15px]" ic={<Ic s={13}><rect x="1.500" y="1.500" width="5" height="13" /><rect x="9.500" y="1.500" width="5" height="5" /><rect x="9.500" y="9.500" width="5" height="5" /></Ic>} />
    <TI t="复盘" mr="mr-[14px]" ic={<Ic s={13}><path d="M7 2L2 8l5 6M14 2L9 8l5 6" /></Ic>} />
    <TI chev mr="mr-[13px]" ic={<Ic s={14}><path d="M3 5v7M8 2v12M13 5v7" /><rect x="1.500" y="6" width="3" height="5" fill="#6b7685" /><rect x="6.500" y="4" width="3" height="8" fill="#fff" /><rect x="11.500" y="6" width="3" height="5" fill="#6b7685" /></Ic>} />
    <TI t="周期" chev mr="mr-[6.500px]" />
    {periods.map((p) => (
      <div key={p} className={`h-full px-[6.500px] flex items-center text-[12.500px] whitespace-nowrap ${p === "30分" ? "bg-[#e8f1fd] text-[#2f7fee]" : "text-[#9aa1ac]"}`}>{p}</div>
    ))}
    <div className="ml-auto flex items-center">
      <span className="text-[13px] text-[#5d6778]">1s</span>
      <Ic s={16} c="#8d96a3" className="ml-[12px]"><rect x="2" y="3.500" width="12" height="11" /><circle cx="8" cy="9" r="2.500" /><path d="M5.500 3.500l1-2h3l1 2" /></Ic>
      <Ic s={16} c="#3b7ff0" className="ml-[13px]"><path d="M3 11l7-9 3 2.500-7 9H3zM3 15h6" /></Ic>
      <Ic s={16} c="#6b7685" className="ml-[13px]"><path d="M6 2h8v13H9M2 12.500h5M4.500 10v5" /></Ic>
      <Ic s={16} c="#8d96a3" className="ml-[13px]"><rect x="2" y="1.500" width="10" height="13" /><circle cx="12" cy="11.500" r="2.800" fill="#8d96a3" /><path d="M4.500 5h5M4.500 8h3" /></Ic>
      <Ic s={16} c="#8d96a3" className="ml-[13px]"><path d="M8 1l6 3.500v7L8 15l-6-3.500v-7z" /><circle cx="8" cy="8" r="2" /></Ic>
      <Ic s={14} c="#8d96a3" className="ml-[14px]"><path d="M2 2l3.500 3.500M14 2l-3.500 3.500M2 14l3.500-3.500M14 14l-3.500-3.500" /></Ic>
      <div className="ml-[7px] w-px h-[18px] bg-[#e6e8ec]" />
      <Ic s={18} c="#9aa1ac" sw={.9} className="ml-[6px]"><path d="M4.500 13a3.500 3.500 0 0 1-.5-7 4.500 4.500 0 0 1 8.700 1A3 3 0 0 1 12 13z" /><path d="M6 9.500l1.500 1.500 2.500-3" /></Ic>
      <span className="ml-[1px] text-[12px] text-[#6b7685]">默认布局</span>
      <Ic s={9} c="#8d96a3" className="ml-[5px]"><path d="M2 5.500l6 5 6-5" /></Ic>
      <div className="ml-[11px] w-[53px] h-[20px] rounded-[2px] bg-[#2f86f0] text-white text-[12.500px] font-medium leading-[20px] text-center">K线分析</div>
      <Ic s={16} c="#3b7ff0" className="ml-[7px]"><circle cx="12.500" cy="3" r="2" /><circle cx="3" cy="8" r="2" /><circle cx="12.500" cy="13" r="2" /><path d="M5 7l5.800-3M5 9l5.800 3" /></Ic>
    </div>
  </div>
);

const B2 = ({ children, active }) => (
  <div className={`w-[32px] h-full flex items-center justify-center ${active ? "bg-[#e8f3fd]" : ""}`}>{children}</div>
);
const Sep = () => <div className="mx-[7px] w-px h-[18px] bg-[#e6e8ec]" />;
const Toolbar2 = () => (
  <div className="h-[33px] shrink-0 flex items-center border-b border-[#eff1f4] pl-[6px]">
    <B2><Ic s={16}><rect x="2" y="2" width="12" height="12" /><path d="M8 5.500v5M5.500 8h5" /><circle cx="2" cy="14" r=".8" /><circle cx="14" cy="2" r=".8" /></Ic></B2>
    <B2><Ic s={17}><rect x="1" y="2" width="14" height="12" /></Ic></B2>
    <B2><span className="text-[15px] text-[#5d6778]">Aa</span></B2>
    <B2><Ic s={16}><path d="M2.500 14L13.500 2" /></Ic></B2>
    <B2><Ic s={18}><path d="M1.500 8h13M1.500 5.500v5M14.500 5.500v5" /></Ic></B2>
    <B2><Ic s={16} c="#5d6778" sw={1.800}><path d="M3 8h.01M8 8h.01M13 8h.01" /></Ic></B2>
    <Sep />
    <B2><span className="text-[15px] text-[#dcb14e]">主</span></B2>
    <B2><span className="text-[15px] text-[#dcb14e]">大</span></B2>
    <B2><span className="text-[15px] text-[#dcb14e]">筹</span></B2>
    <B2><Ic s={18}><path d="M3 12V3h9M13 4v9H4" /><path d="M6 11l1-3 3-3 1.500 1.500-3 3z" /></Ic></B2>
    <B2><Ic s={17}><path d="M2 14L13 2" /><circle cx="2.500" cy="13.500" r="1" /><path d="M9 11l2.500-2 2.500 2-2.500 2z" fill="#6b7685" /></Ic></B2>
    <Sep />
    <B2><Ic s={18} c="#3b7ff0"><path d="M2 2v12M5 2h9v12l-4.500-3L5 14z" /></Ic></B2>
    <B2><Ic s={16}><path d="M1.500 11L11 1.500l3.500 3.500L5 14.500zM5 8l1.500 1.500M8 5l1.500 1.500" /></Ic></B2>
    <B2><Ic s={18}><path d="M2 13l1-3 6-7 2 2-6 7zM9 13c1-1.500 2-1.500 2.500 0 .5 1 1.500.5 2.500-1" /></Ic></B2>
    <B2><Ic s={18}><path d="M3 1.500v13M8 1.500v13M13 1.500v13" /><rect x="1.500" y="5" width="3" height="6" fill="#fff" /><rect x="6.500" y="4" width="3" height="7" fill="#fff" /><rect x="11.500" y="5" width="3" height="6" fill="#fff" /></Ic></B2>
    <B2><Ic s={16}><rect x="3.500" y="4" width="9" height="10.500" /><path d="M8 1.500V7M8 9v2" /></Ic></B2>
    <B2><Ic s={16}><path d="M13 7V1.500H2.500v13H7M5 5h5M5 8h3" /><path d="M8.500 14l.5-2 4-4 1.500 1.500-4 4z" /></Ic></B2>
    <B2><Ic s={17}><path d="M12 5l-5.500 6a1.800 1.800 0 0 0 2.500 2.500L14 8a3.500 3.500 0 0 0-5-5L3.500 9" transform="translate(-1 .5)" /></Ic></B2>
    <B2 active><Ic s={17} c="#5aa7e8"><path d="M1.500 2h13L9.500 8v6.500h-3V8z" /></Ic></B2>
    <B2><Ic s={17}><path d="M1.500 3.500h13M6 3.500V1.500h4v2M3.500 3.500v11h9v-11M6.500 6.500v5M9.500 6.500v5" /></Ic></B2>
  </div>
);

const Chart = () => (
  <div className="relative flex-1 min-h-0 overflow-hidden">
    <ChartSvg />

    {/* expanders */}
    <div className="absolute left-[11px] top-[5px] flex flex-col gap-[3px]">
      {[0, 1].map((i) => (
        <Ic key={i} s={15} c="#8d96a3" sw={1}><circle cx="8" cy="8" r="7" /><path d="M6.500 4.500L10 8l-3.500 3.500" /></Ic>
      ))}
    </div>

    {/* price scale */}
    {prices.filter((p) => p.v !== "99000.00").map((p) => (
      <div key={p.v} style={{ top: p.y - 140 - 8 }} className={`absolute left-[2370px] w-[76px] h-[16px] text-center text-[12px] leading-[16px] ${p.y > 190 && p.y < 460 ? "text-[#7c94b0]" : "text-[#9aa3b0]"}`}>{p.v}</div>
    ))}
    <div className="absolute left-[2369px] top-[37px] w-[77px] h-[18px] bg-[#0e8cff] text-white text-[12px] font-medium leading-[18px] text-center">103231.92</div>
    <div className="absolute left-[2369px] top-[315px] w-[77px] h-[18px] bg-[#0e8cff] text-white text-[12px] font-medium leading-[18px] text-center">99363.86</div>
    <div className="absolute left-[2369px] top-[333px] w-[77px] h-[25px] bg-[#2db890] flex flex-col">
      <div className="mt-[4px] h-px bg-white" />
      <div className="flex-1 text-white text-[12px] font-medium leading-[20px] text-center">02:48</div>
    </div>

    {/* signal badges */}
    <div className="absolute left-[628px] top-[674px] w-[21px] h-[19px] rounded-[4px] bg-[#ff0000] text-white text-[12px] leading-[19px] text-center">顶</div>
    <div className="absolute left-[621px] top-[682px] w-[20px] h-[20px] rounded-[4px] bg-[#ff0000] text-white text-[12px] leading-[20px] text-center">顶</div>
    <div className="absolute left-[669px] top-[901px] w-[42px] h-[20px] rounded-[2px] bg-[#0a7d0a] text-white text-[12px] leading-[20px] text-center">锤头线</div>
    <div className="absolute left-[220px] top-[1034px] text-[12px] leading-[16px] text-[#3a4a5c]">89372.65</div>

    <Panel />

    {/* annotation frame */}
    <svg width="596" height="62" viewBox="0 0 596 62" className="absolute left-[806px] top-[393px]">
      <rect x="2" y="2" width="590" height="57" fill="none" stroke="#ff0000" strokeWidth="4" strokeDasharray="11 6" />
    </svg>

    <div className="absolute left-[1577px] top-[286px] text-[44px] leading-[56px] font-bold text-[#ff0000] whitespace-nowrap">总金额达7.4亿美元</div>

    {/* floating tools */}
    <div className="absolute left-[1905px] top-[85px] w-[95px] h-[42px] flex bg-white shadow-[0_2px_7px_rgba(60,70,90,0.35)]">
      <div className="w-[14px] border-r border-[#e6e8ec] flex items-center justify-center">
        <Ic s={14} c="#6b7685" sw={1.500}><path d="M6 3h.01M10 3h.01M6 8h.01M10 8h.01M6 13h.01M10 13h.01" /></Ic>
      </div>
      <div className="w-[41px] border-r border-[#e6e8ec] flex items-center justify-center">
        <Ic s={20} c="#7c8695" sw={.9}><path d="M6 13.500H4.500L1.500 8l3-5.500h6l3 5.500" /><path d="M7 10h6v3.500H9M9 8.500L7 10l2 1.500" /></Ic>
      </div>
      <div className="w-[40px] flex flex-col items-center justify-center">
        <Ic s={16} c="#b6e4e6" sw={.9}><path d="M3 2l10 7-10 3zM3 12l4-10 6 7" /></Ic>
        <div className="mt-[2px] w-[15px] h-[2px] bg-[#b6e4e6]" />
      </div>
    </div>
  </div>
);

const TimeAxis = () => (
  <div className="relative h-[24px] shrink-0 border-y border-[#f0f2f5]">
    <div className="absolute left-[916px] top-0 w-[669px] h-[22px] bg-[#c5e2fd]" />
    {times.map(([x, t, b, blue]) => (
      <span key={x} style={{ left: x - 66 }} className={`absolute top-0 -translate-x-1/2 leading-[22px] whitespace-nowrap ${b ? "font-bold text-[12.500px] " : "text-[12px] "}${blue ? "text-[#7c94b0]" : "text-[#9aa3b0]"}`}>{t}</span>
    ))}
    <div className="absolute left-[916px] top-0 w-[105px] h-[22px] bg-[#0e8cff] text-white text-[12.500px] font-medium leading-[22px] text-center">2024-11-21 01:30</div>
    <div className="absolute left-[1479px] top-0 w-[106px] h-[22px] bg-[#0e8cff] text-white text-[12.500px] font-medium leading-[22px] text-center">2024-11-22 16:00</div>
    <span className="absolute left-[2408px] top-0 text-[13px] leading-[22px] font-medium text-[#2f7fee]">筹</span>
    <span className="absolute left-[2429px] top-0 text-[13px] leading-[22px] text-[#9aa3b0]">爆</span>
  </div>
);

export default function App() {
  return (
    <div className="w-[2560px] h-[1336px] flex flex-col overflow-hidden bg-white [font-family:Roboto,'Noto_Sans_CJK_SC',sans-serif]">
      <TopBar />
      <div className="flex-1 min-h-0 flex">
        <Sidebar />
        <main className="w-[2449px] flex flex-col pb-[4px]">
          <Tabs />
          <Toolbar1 />
          <Toolbar2 />
          <Chart />
          <TimeAxis />
        </main>
        <RightRail />
      </div>
    </div>
  );
}
